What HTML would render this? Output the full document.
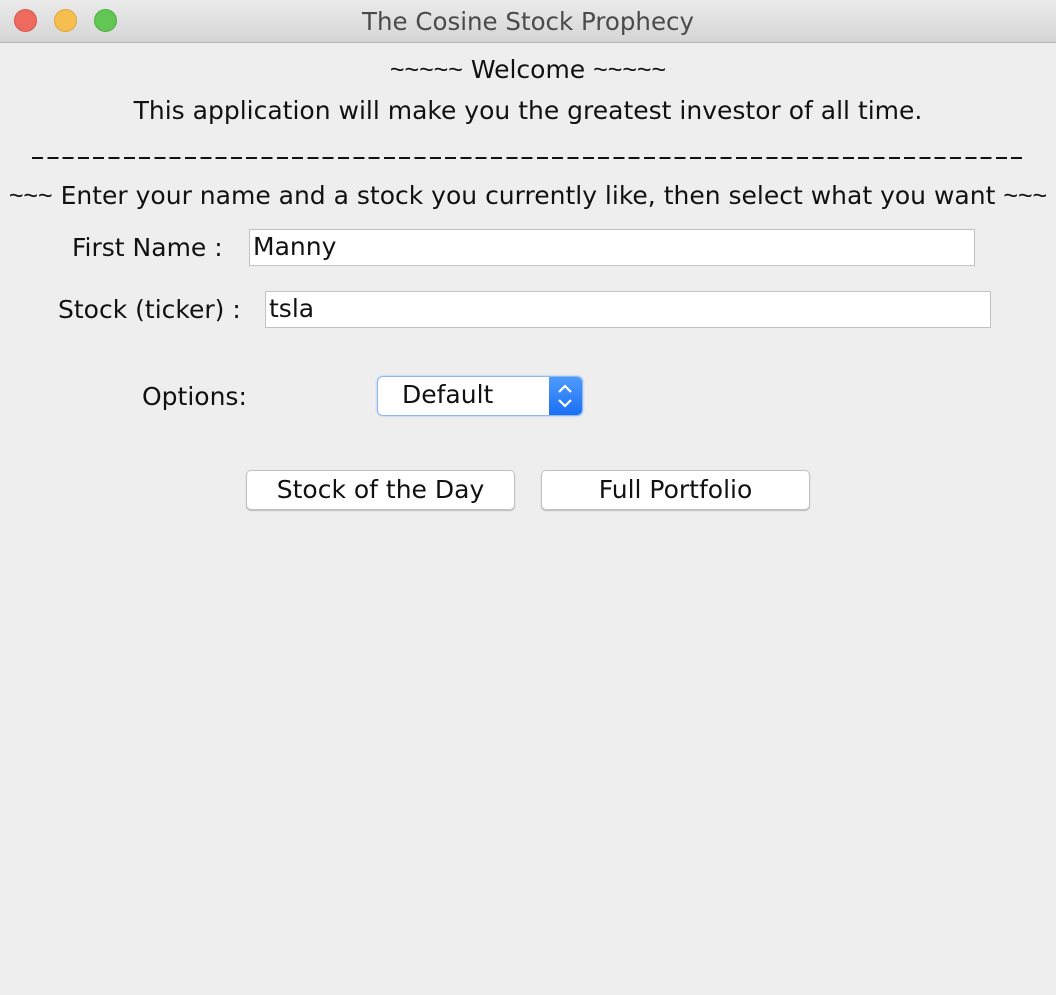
<!DOCTYPE html>
<html><head><style>
body{margin:0;width:1056px;height:995px;background:#eeeeee;font-family:"DejaVu Sans","Liberation Sans",sans-serif;color:#111;position:relative;overflow:hidden}
.tb{position:absolute;left:0;top:0;width:1056px;height:42px;background:linear-gradient(#ebebeb,#d5d5d5);border-bottom:1px solid #b5b5b5}
.tb .t{position:absolute;left:0;right:0;top:7px;text-align:center;font-size:24.5px;color:#4a4a4a}
.dot{position:absolute;top:9px;width:23px;height:23px;border-radius:50%}
.c{position:absolute;left:0;width:1056px;text-align:center;font-size:25px;white-space:nowrap}
.a{position:absolute;font-size:25px;white-space:nowrap}
.tl{font-family:"Liberation Sans",sans-serif}
.in{position:absolute;height:37px;background:#fff;border:1px solid #c3c3c3;box-sizing:border-box;font-size:25px;padding:2px 3px}
.btn{position:absolute;top:470px;width:269px;height:40px;background:#fff;border:1px solid #c0c0c0;border-radius:5px;box-sizing:border-box;text-align:center;font-size:25px;line-height:38px;box-shadow:0 1px 1px #bbb}
</style></head><body>
<div class="tb"><div class="dot" style="left:14px;background:#ee6a5f;border:1px solid #d8564b;box-sizing:border-box"></div><div class="dot" style="left:54px;background:#f6be4f;border:1px solid #dfa53a;box-sizing:border-box"></div><div class="dot" style="left:94px;background:#62c655;border:1px solid #4fae42;box-sizing:border-box"></div><div class="t">The Cosine Stock Prophecy</div></div>
<div class="c" style="top:55px"><span class="tl">~~~~~</span> Welcome <span class="tl">~~~~~</span></div>
<div class="c" style="top:96px">This application will make you the greatest investor of all time.</div>
<div style="position:absolute;left:32px;top:157px;width:990px;height:2px;background:repeating-linear-gradient(90deg,#111 0 11px,transparent 11px 15.3px)"></div>
<div class="c" style="top:181px"><span class="tl">~~~</span> Enter your name and a stock you currently like, then select what you want <span class="tl">~~~</span></div>
<div class="a" style="left:72px;top:233px">First Name :</div>
<div class="in" style="left:249px;top:229px;width:726px">Manny</div>
<div class="a" style="left:58px;top:295px">Stock (ticker) :</div>
<div class="in" style="left:265px;top:291px;width:726px">tsla</div>
<div class="a" style="left:142px;top:382px">Options:</div>
<div style="position:absolute;left:377px;top:376px;width:206px;height:40px;box-sizing:border-box;border:1px solid #8fb7f0;border-radius:6px;background:#fff;box-shadow:0 0 2px #9ec3f5;overflow:hidden">
<div style="position:absolute;left:24px;top:3px;font-size:25px">Default</div>
<div style="position:absolute;right:0;top:0;width:33px;height:38px;background:linear-gradient(#4f9bfb,#1a6ff5)">
<svg width="33" height="38" viewBox="0 0 33 38"><path d="M10 15 L16 9 L22 15 M10 23 L16 29 L22 23" fill="none" stroke="#fff" stroke-width="2.2"/></svg></div></div>
<div class="btn" style="left:246px">Stock of the Day</div>
<div class="btn" style="left:541px">Full Portfolio</div>
</body></html>
